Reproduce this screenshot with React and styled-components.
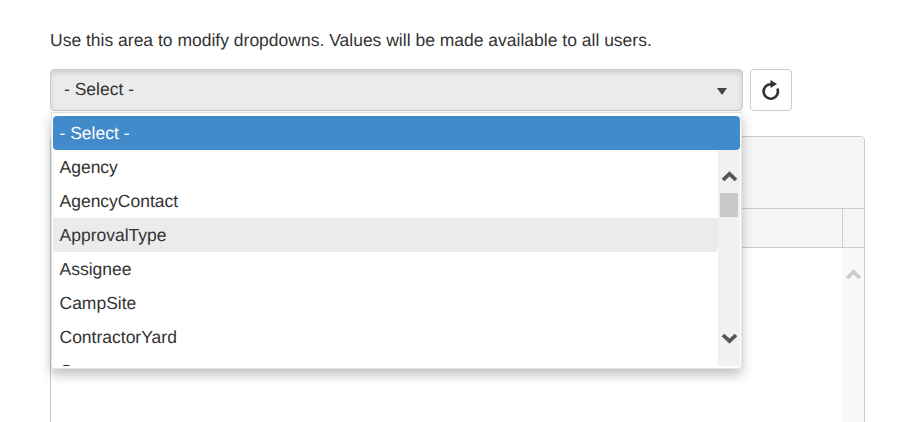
import React from "react";
import styled, { createGlobalStyle } from "styled-components";

const GlobalStyle = createGlobalStyle`
  html, body {
    margin: 0;
    height: 100%;
    overflow: hidden;
    background: #fff;
  }
  body {
    font-family: "Liberation Sans", Arial, sans-serif;
    font-size: 17.5px;
    color: #333;
    text-rendering: geometricPrecision;
  }
`;

const Page = styled.div`
  padding: 29px 49px 0 50px;
  height: 393px;
  overflow: hidden;
`;

const Intro = styled.p`
  margin: 0 0 20px;
  height: 20px;
  line-height: 23px;
  font-size: 17.5px;
  white-space: nowrap;
  color: #333;
`;

const Toolbar = styled.div`
  display: flex;
  gap: 7px;
  position: relative;
  z-index: 2;
`;

const SelectWrap = styled.div`
  position: relative;
  width: 693px;
`;

const SelectButton = styled.div`
  box-sizing: border-box;
  height: 42px;
  display: flex;
  align-items: center;
  justify-content: space-between;
  padding: 0 15px 2px 13px;
  background: #ebebeb;
  border: 1px solid #ccc;
  border-radius: 4px;
  box-shadow: inset 0 3px 5px rgba(0, 0, 0, 0.125);
  font-size: 17.5px;
  color: #333;
`;

const Caret = styled.span`
  width: 0;
  height: 0;
  border-left: 5px solid transparent;
  border-right: 5px solid transparent;
  border-top: 7px solid #444;
  margin-top: 4px;
`;

const RefreshButton = styled.div`
  box-sizing: border-box;
  width: 42px;
  height: 42px;
  display: flex;
  align-items: center;
  justify-content: center;
  background: #fff;
  border: 1px solid #ccc;
  border-radius: 4px;
`;

const Menu = styled.div`
  position: absolute;
  top: 43px;
  left: 1px;
  right: 1px;
  box-sizing: border-box;
  height: 257px;
  padding: 3px 1px 3px 1px;
  background: #fff;
  border: 1px solid #e4e4e4;
  border-top-color: #ddd;
  border-radius: 0 0 4px 4px;
  box-shadow: 0 6px 12px rgba(0, 0, 0, 0.25);
`;

const MenuItem = styled.div`
  box-sizing: border-box;
  height: 34px;
  line-height: 34px;
  padding: 0 6.5px;
  font-size: 17.5px;
  white-space: nowrap;
  color: ${(props) => (props.$selected ? "#fff" : "#333")};
  background: ${(props) =>
    props.$selected ? "#428bca" : props.$hover ? "#ebebeb" : "transparent"};
  border-radius: ${(props) =>
    props.$selected ? "4px" : props.$hover ? "0 0 4px 4px" : "0"};
`;

const ScrollArea = styled.div`
  display: flex;
  height: 216px;
  overflow: hidden;
`;

const List = styled.div`
  flex: 1;
  overflow: hidden;
`;

const Scrollbar = styled.div`
  width: 22px;
  flex: none;
  position: relative;
  background: ${(props) => (props.$light ? "#f9f9f9" : "#f1f1f1")};
`;

const ScrollArrow = styled.svg`
  position: absolute;
  left: ${(props) => props.$left}px;
  top: ${(props) => props.$top}px;
`;

const Thumb = styled.div`
  position: absolute;
  left: 2px;
  top: 43px;
  width: 18px;
  height: 24px;
  background: #c9c9c9;
`;

const Panel = styled.div`
  margin-top: 25px;
  box-sizing: border-box;
  width: 815px;
  height: 300px;
  border: 1px solid #ccc;
  border-radius: 4px 4px 0 0;
  background: #fff;
`;

const PanelHeading = styled.div`
  height: 71px;
  background: #f5f5f5;
  border-bottom: 1px solid #ccc;
  border-radius: 4px 4px 0 0;
`;

const ColumnRow = styled.div`
  display: flex;
  justify-content: flex-end;
  height: 38px;
  background: #f5f5f5;
  border-bottom: 1px solid #ccc;
`;

const ColumnSpacer = styled.div`
  width: 21px;
  border-left: 1px solid #ccc;
`;

const PanelBody = styled.div`
  display: flex;
  justify-content: flex-end;
  height: 190px;
`;

const items = [
  "Agency",
  "AgencyContact",
  "ApprovalType",
  "Assignee",
  "CampSite",
  "ContractorYard",
  "County",
];

function Chevron({ up, color, left, top }) {
  return (
    <ScrollArrow $left={left} $top={top} width="17" height="13" viewBox="0 0 17 13">
      <polyline
        points={up ? "2,10 8.5,3.8 15,10" : "2,3 8.5,9.2 15,3"}
        fill="none"
        stroke={color}
        strokeWidth="3.8"
      />
    </ScrollArrow>
  );
}

function RefreshIcon() {
  return (
    <svg width="20" height="22" viewBox="0 0 20 22">
      <path
        d="M10.5 5.3 A7.2 7.2 0 1 0 16.4 9.6"
        fill="none"
        stroke="#333"
        strokeWidth="2.6"
      />
      <path d="M9.5 1 L16 5 L9.5 9 Z" fill="#333" />
    </svg>
  );
}

export default function App() {
  return (
    <>
      <GlobalStyle />
      <Page>
        <Intro>Use this area to modify dropdowns. Values will be made available to all users.</Intro>
        <Toolbar>
          <SelectWrap>
            <SelectButton>
              - Select -
              <Caret />
            </SelectButton>
            <Menu>
              <MenuItem $selected>- Select -</MenuItem>
              <ScrollArea>
                <List>
                  {items.map((item) => (
                    <MenuItem key={item} $hover={item === "ApprovalType"}>
                      {item}
                    </MenuItem>
                  ))}
                </List>
                <Scrollbar>
                  <Chevron up color="#555" left={3} top={20} />
                  <Thumb />
                  <Chevron color="#555" left={3} top={182} />
                </Scrollbar>
              </ScrollArea>
            </Menu>
          </SelectWrap>
          <RefreshButton>
            <RefreshIcon />
          </RefreshButton>
        </Toolbar>
        <Panel>
          <PanelHeading />
          <ColumnRow>
            <ColumnSpacer />
          </ColumnRow>
          <PanelBody>
            <Scrollbar $light>
              <Chevron up color="#ccc" left={3} top={20} />
            </Scrollbar>
          </PanelBody>
        </Panel>
      </Page>
    </>
  );
}
